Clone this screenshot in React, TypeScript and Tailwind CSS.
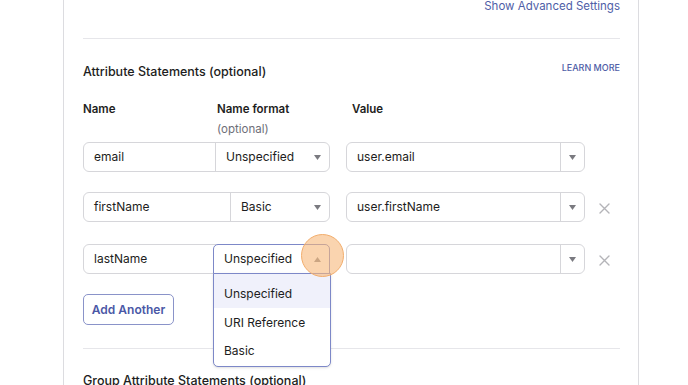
import React from "react";

const Caret = ({ up = false }: { up?: boolean }) => (
  <svg width="7" height="5" viewBox="0 0 7 5" className="block">
    {up ? <path d="M0 5 L3.5 0 L7 5 Z" fill="#8a8a8f" /> : <path d="M0 0 L7 0 L3.5 5 Z" fill="#7a7a80" />}
  </svg>
);

const XIcon = () => (
  <svg width="11" height="11" viewBox="0 0 11 11" className="block">
    <path d="M1 1 L10 10 M10 1 L1 10" stroke="#b4b4b8" strokeWidth="1.4" strokeLinecap="round" />
  </svg>
);

function Row({
  name,
  nameW,
  format,
  value,
  active,
  removable,
}: {
  name: string;
  nameW: number;
  format: string;
  value: string;
  active?: boolean;
  removable?: boolean;
}) {
  return (
    <div className="flex items-center h-[30px]">
      <div className="relative flex h-full w-[247px] rounded-[6px] border border-[#d6d6da] bg-white">
        <div className="flex items-center pl-[10px] text-[12px] text-[#1d1d21]" style={{ width: nameW }}>
          {name}
        </div>
        <div
          className={
            active
              ? "absolute top-[-1px] bottom-[-1px] right-[-1px] flex items-center justify-between pl-[10px] pr-[8px] rounded-t-[5px] border border-[#7d88c8] bg-white"
              : "flex flex-1 items-center justify-between pl-[10px] pr-[8px] border-l border-[#d6d6da]"
          }
          style={active ? { left: nameW - 2 } : undefined}
        >
          <span className="text-[12px] text-[#1d1d21]">{format}</span>
          <Caret up={active} />
        </div>
      </div>
      <div className="ml-[16px] flex h-full w-[239px] rounded-[6px] border border-[#d6d6da] bg-white">
        <div className="flex flex-1 items-center pl-[10px] text-[12px] text-[#1d1d21]">{value}</div>
        <div className="flex w-[24px] items-center justify-center border-l border-[#d6d6da]">
          <Caret />
        </div>
      </div>
      {removable && (
        <div className="ml-[14px] mt-[2px]">
          <XIcon />
        </div>
      )}
    </div>
  );
}

export default function App() {
  return (
    <div
      className="relative h-[385px] w-[688px] overflow-hidden bg-white"
      style={{ fontFamily: "Inter, 'Noto Sans', sans-serif" }}
    >
      <div className="ml-[63px] w-[576px] border-x border-[#dcdce0] pl-[19px] pr-[18px]">
        <div className="flex justify-end text-[11.5px] leading-[12px] text-[#4f5ea7]">Show Advanced Settings</div>
        <div className="mt-[26px] h-px bg-[#e6e6ea]" />
        <div className="mt-[25px] flex items-start justify-between">
          <div className="text-[12.5px] leading-[16px] font-medium text-[#1d1d21]">Attribute Statements (optional)</div>
          <div className="mt-[-2px] text-[9px] leading-[12px] font-medium text-[#4f5ea7]">LEARN MORE</div>
        </div>
        <div className="mt-[21px] flex text-[11.5px] leading-[16px] font-semibold text-[#1d1d21]">
          <div className="w-[134px]">Name</div>
          <div className="w-[135px]">
            <div>Name format</div>
            <div className="mt-[4px] font-normal text-[#6e6e78]">(optional)</div>
          </div>
          <div>Value</div>
        </div>
        <div className="mt-[5px]">
          <Row name="email" nameW={131} format="Unspecified" value="user.email" />
        </div>
        <div className="mt-[20px]">
          <Row name="firstName" nameW={146} format="Basic" value="user.firstName" removable />
        </div>
        <div className="mt-[22px]">
          <Row name="lastName" nameW={131} format="Unspecified" value="" active removable />
        </div>
        <div className="mt-[20px]">
          <button className="h-[31px] w-[91px] rounded-[5px] border border-[#8a93c9] text-[12px] font-semibold text-[#4a58a6]">
            Add Another
          </button>
        </div>
        <div className="mt-[23px] h-px bg-[#e6e6ea]" />
        <div className="mt-[24px] text-[12.5px] leading-[16px] font-medium text-[#1d1d21]">Group Attribute Statements (optional)</div>
      </div>

      {/* dropdown menu */}
      <div className="absolute left-[213px] top-[273px] w-[118px] rounded-b-[5px] border border-[#7d88c8] bg-white py-0 shadow-sm">
        <div className="flex h-[34px] items-center bg-[#f0f1fb] pl-[10px] pt-[6px] text-[12px] text-[#1d1d21]">Unspecified</div>
        <div className="flex h-[29px] items-center pl-[10px] text-[12px] text-[#1d1d21]">URI Reference</div>
        <div className="flex h-[29px] items-center pl-[10px] pb-[2px] text-[12px] text-[#1d1d21]">Basic</div>
      </div>

      {/* click highlight */}
      <div className="absolute left-[301px] top-[234px] h-[43px] w-[43px] rounded-full border border-[#f2ad6c] bg-[#f6b77a]/60" />
    </div>
  );
}
